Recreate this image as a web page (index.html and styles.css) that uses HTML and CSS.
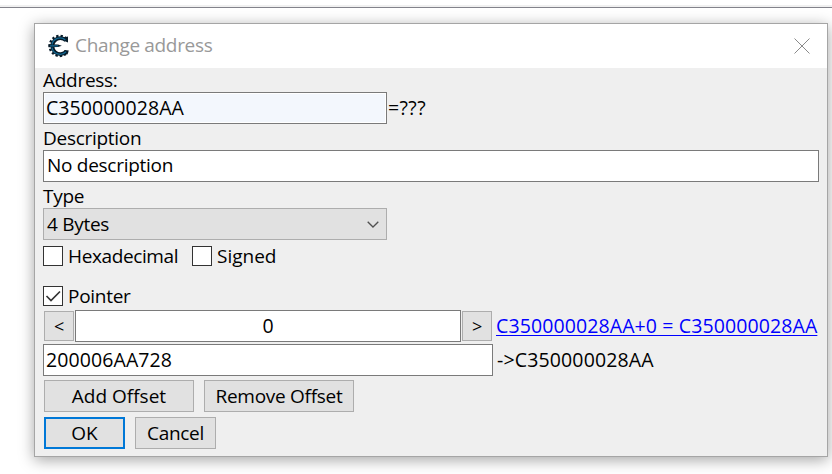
FILE: index.html
```html
<!DOCTYPE html>
<html lang="en">
<head>
<meta charset="utf-8">
<title>Change address</title>
<link rel="stylesheet" href="styles.css">
</head>
<body>
<div class="backdrop-edge"></div>
<main class="dialog">
  <header class="titlebar">
    <svg class="logo" width="24" height="24" viewBox="0 0 24 24">
      <path class="teeth" d="M20.5 4.6A10 10 0 1 0 21.5 18.2"/>
      <path class="ring" d="M20 6.4A8 8 0 1 0 20.5 17.2"/>
      <path class="prong" d="M17.8 3.5L22 2.5V8.5L18.5 7Z"/>
      <path class="prong" d="M18.5 16L22.8 16.5L21.5 20.5L18 19Z"/>
      <path class="bar" d="M2.5 10.3L12 10.6L15.8 11.8L12 13L2.5 13.2Z"/>
      <path class="glow" d="M19.4 5.9A8.2 8.2 0 0 0 6 10.5M4 11.8H12M6 13.5A8.2 8.2 0 0 0 20 17.8"/>
    </svg>
    <h1 class="title">Change address</h1>
    <svg class="close" width="16" height="16" viewBox="0 0 16 16"><path d="M.5 .5L15.5 15.5M15.5 .5L.5 15.5"/></svg>
  </header>
  <form class="body">
    <div class="label first">Address:</div>
    <div class="row"><div class="field short tinted number">C350000028AA</div><span class="result number">=???</span></div>
    <div class="label">Description</div>
    <div class="field description">No description</div>
    <div class="label">Type</div>
    <div class="combo"><span>4 Bytes</span><svg width="12" height="7" viewBox="0 0 12 7"><path d="M.7 .7L6 6L11.3 .7"/></svg></div>
    <div class="checks">
      <label class="check hex"><i class="box"></i><span class="tight">Hexadecimal</span></label>
      <label class="check"><i class="box"></i><span class="loose">Signed</span></label>
    </div>
    <label class="check pointer"><i class="box"><svg width="18" height="18" viewBox="0 0 18 18"><path d="M2.5 9L7 13.5L16 4.5"/></svg></i><span>Pointer</span></label>
    <div class="row stepper">
      <div class="button arrow">&lt;</div><div class="field offset number">0</div><div class="button arrow">&gt;</div>
      <a class="link number">C350000028AA+0 = C350000028AA</a>
    </div>
    <div class="row base"><div class="field wide number">200006AA728</div><span class="target number">-&gt;C350000028AA</span></div>
    <div class="row actions"><div class="button large loose">Add Offset</div><div class="button large">Remove Offset</div></div>
    <div class="row actions last"><div class="button small primary loose">OK</div><div class="button small">Cancel</div></div>
  </form>
</main>
</body>
</html>
```
FILE: styles.css
```css
* { box-sizing: border-box; }
body {
  margin: 0;
  height: 474px;
  overflow: hidden;
  background: #fff;
  color: #000;
  font: 19px/26px "Open Sans", "Noto Sans", sans-serif;
  letter-spacing: -.28px;
  white-space: nowrap;
}
.number { font-size: 19.5px; letter-spacing: .05px; }
.loose { letter-spacing: 0; }
.tight { letter-spacing: -.38px; }
.backdrop-edge { height: 8px; border-bottom: 1px solid #83838b; box-shadow: inset 0 -2px #f0f0f0; }
.dialog {
  width: 794px;
  height: 434px;
  margin: 15px 0 0 34px;
  border: 1px solid #a5a5a5;
  background: #efefef;
  box-shadow: 0 3px 14px rgba(0, 0, 0, .36);
}
.titlebar { display: flex; align-items: center; height: 44px; padding: 0 17px 0 11px; background: #fff; }
.logo { margin-right: 5px; }
.logo path { fill: none; }
.logo .teeth { stroke: #071b29; stroke-width: 2.4; stroke-dasharray: 2.3 2; }
.logo .ring { stroke: #071b29; stroke-width: 3.8; }
.logo .bar, .logo .prong { fill: #071b29; }
.logo .glow { stroke: #126792; stroke-width: 1.3; }
.title { flex: 1; margin: -2px 0 0; font-size: 19px; font-weight: 400; letter-spacing: -.34px; color: #999; }
.close path { fill: none; stroke: #8a8a8a; stroke-width: 1; }
.body { padding: 0 8px; }
.label { height: 26px; line-height: 28px; }
.first { height: 24px; line-height: 24px; }
.row { display: flex; align-items: center; }
.field { height: 32px; padding-left: 2px; border: 1px solid #7a7a7a; background: #fff; line-height: 30px; }
.description { padding-left: 3px; line-height: 28px; }
.short { width: 344px; line-height: 29px; }
.tinted { background: #f3f7fd; box-shadow: inset 0 0 0 1px #fff; }
.result { margin-left: 1px; letter-spacing: .4px; }
.combo {
  display: flex;
  align-items: center;
  justify-content: space-between;
  width: 344px;
  height: 32px;
  padding: 0 7px 0 3px;
  border: 1px solid #adadad;
  background: #e1e1e1;
}
.combo path { fill: none; stroke: #505050; stroke-width: 1.3; }
.checks { display: flex; margin-top: 6px; }
.check { display: flex; align-items: center; gap: 5px; height: 20px; }
.hex { width: 149px; }
.box { width: 20px; height: 20px; border: 1px solid #333; background: #fff; }
.box svg { display: block; }
.box path { fill: none; stroke: #333; stroke-width: 1.7; }
.pointer { margin-top: 20px; }
.stepper { margin: 4px 0 0 1px; }
.button {
  display: flex;
  align-items: center;
  justify-content: center;
  height: 32px;
  border: 1px solid #adadad;
  background: #e1e1e1;
}
.arrow { width: 30px; height: 30px; font-size: 18px; }
.offset { width: 386px; margin: 0 1px; padding: 0; text-align: center; }
.link { margin-left: 4px; letter-spacing: .11px; color: #00f; text-decoration: underline; text-decoration-thickness: 1px; text-underline-offset: 2px; }
.base { margin-top: 2px; }
.wide { width: 450px; letter-spacing: .1px; }
.target { margin-left: 4px; letter-spacing: .15px; }
.actions { gap: 10px; margin: 4px 0 0 1px; }
.last { margin-top: 5px; }
.large { width: 150px; }
.small { width: 81px; }
.primary { border: 2px solid #0078d7; }
```
